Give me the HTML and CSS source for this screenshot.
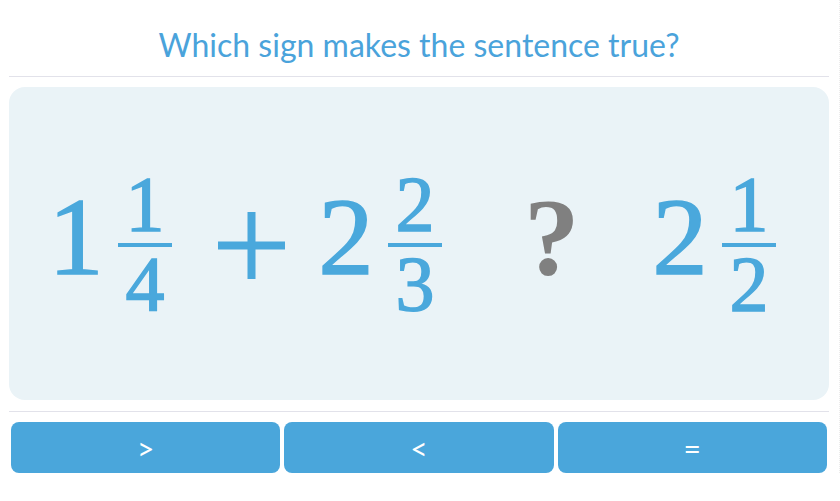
FILE: index.html
```html
<!DOCTYPE html>
<html lang="en">
<head>
<meta charset="UTF-8" />
<meta name="viewport" content="width=device-width, initial-scale=1" />
<title>Which sign makes the sentence true?</title>
<link rel="stylesheet" href="styles.css">
</head>
<body>

<div class="quiz">
  <h1 class="question">Which sign makes the sentence true?</h1>

  <div class="board">
    <span class="whole">1</span>
    <span class="frac gap-s"><span class="num">1</span><span class="den">4</span></span>
    <span class="op gap-l" aria-label="plus"><svg width="67" height="67" viewBox="0 0 67 67"><rect x="0" y="29.5" width="67" height="8" /><rect x="29.5" y="0" width="8" height="67" /></svg></span>
    <span class="whole gap-m">2</span>
    <span class="frac gap-s"><span class="num">2</span><span class="den">3</span></span>
    <span class="unknown gap-q">?</span>
    <span class="whole gap-r">2</span>
    <span class="frac gap-s"><span class="num">1</span><span class="den">2</span></span>
  </div>

  <div class="answers">
    <button class="answer">&gt;</button>
    <button class="answer">&lt;</button>
    <button class="answer">=</button>
  </div>
</div>

</body>
</html>
```

FILE: styles.css
```css
html {
  border-right: 1px dotted #ececec;
  width: 839px;
}
body {
  margin: 0;
  font-family: Lato, "Open Sans", sans-serif;
  background: #fff;
}
.quiz {
  width: 820px;
  margin-left: 9px;
}
.question {
  margin: 0;
  height: 77px;
  line-height: 89px;
  font-size: 32px;
  font-weight: 400;
  color: #4aa3db;
  text-align: center;
  border-bottom: 1px solid #e2e2ea;
  box-sizing: border-box;
}

/* the sentence: 1 1/4 + 2 2/3 ? 2 1/2 */
.board {
  margin-top: 10px;
  height: 313px;
  padding-left: 39px;
  box-sizing: border-box;
  border-radius: 16px;
  background: #eaf3f7;
  display: flex;
  align-items: center;
  font-family: "Liberation Serif", "Times New Roman", serif;
  color: #4aa8dc;
}
.whole,
.frac {
  -webkit-text-stroke: 1.5px #4aa8dc;
}
.whole {
  width: 56px;
  margin-bottom: 14px;
  font-size: 111px;
  line-height: 1;
  text-align: center;
}
.frac {
  width: 54px;
  display: flex;
  flex-direction: column;
  font-size: 78px;
  line-height: 78px;
  text-align: center;
}
.num {
  border-bottom: 4px solid #4aa8dc;
}
.den {
  margin-top: -2px;
}
.op {
  display: flex;
  margin-top: 4px;
  fill: #4aa8dc;
}
.unknown {
  width: 50px;
  margin-bottom: 14px;
  font-size: 111px;
  font-weight: 700;
  line-height: 1;
  text-align: center;
  color: #808080;
}
.gap-s { margin-left: 14px; }
.gap-l { margin-left: 46px; }
.gap-m { margin-left: 33px; }
.gap-q { margin-left: 82px; }
.gap-r { margin-left: 78px; }

.answers {
  margin-top: 11px;
  border-top: 1px solid #e2e2ea;
  padding: 10px 2px 0;
  display: flex;
  gap: 4px;
}
.answer {
  flex: 1;
  height: 51px;
  border: none;
  border-radius: 8px;
  background: #4aa6db;
  color: #fff;
  font-family: Lato, sans-serif;
  font-size: 30px;
  font-weight: 400;
  cursor: pointer;
}
```
